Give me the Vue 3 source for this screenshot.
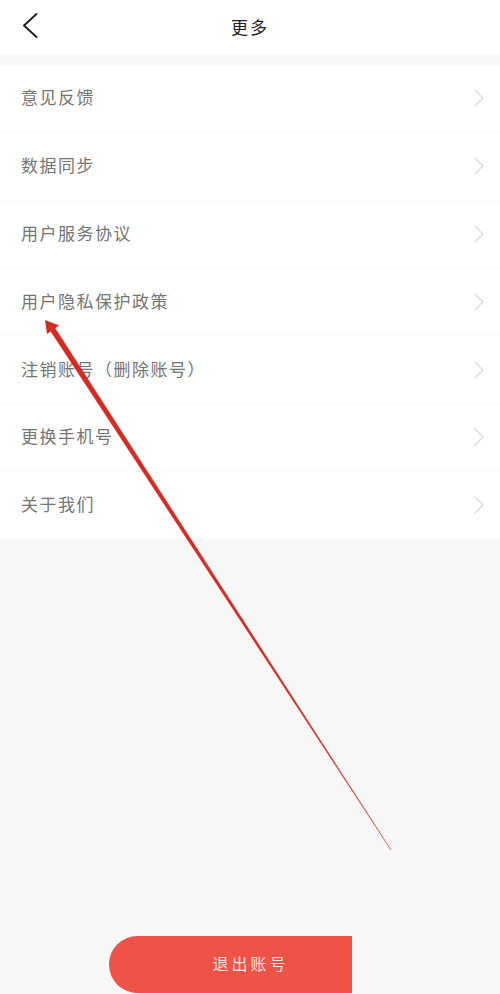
<template>
  <div class="page">
    <header class="topbar">
      <svg class="back" width="20" height="28" viewBox="0 0 20 28" fill="none">
        <path d="M15.5 2L3 13.5L15.5 25" stroke="#222" stroke-width="2" stroke-linecap="round" stroke-linejoin="round"/>
      </svg>
      <span class="title">更多</span>
    </header>

    <ul class="menu">
      <li v-for="item in items" :key="item" class="menu-row">
        <span class="menu-label">{{ item }}</span>
        <svg width="12" height="20" viewBox="0 0 12 20" fill="none">
          <path d="M2 2L10 10L2 18" stroke="#dcdcdc" stroke-width="1.5" stroke-linecap="round" stroke-linejoin="round"/>
        </svg>
      </li>
    </ul>

    <button class="logout">退出账号</button>

    <!-- красная стрелка поверх скриншота -->
    <svg class="annotation" width="500" height="994" viewBox="0 0 500 994">
      <polygon points="391,850 50.5,331 55,328" fill="#d42c22" stroke="#d42c22" stroke-width="0.4"/>
      <polygon points="45,320 47,334 59,325.5" fill="#d42c22"/>
    </svg>
  </div>
</template>

<script setup>
const items = [
  '意见反馈',
  '数据同步',
  '用户服务协议',
  '用户隐私保护政策',
  '注销账号（删除账号）',
  '更换手机号',
  '关于我们'
]
</script>

<style>
html,
body {
  margin: 0;
  background: #f7f7f7;
}
</style>

<style scoped>
.page {
  position: relative;
  display: flex;
  flex-direction: column;
  width: 500px;
  height: 994px;
  overflow: hidden;
  background: #f7f7f7;
  font-family: "Noto Sans CJK SC", "Noto Sans", sans-serif;
}

.topbar {
  position: relative;
  display: flex;
  align-items: center;
  justify-content: center;
  height: 55px;
  padding-bottom: 3px;
  box-sizing: border-box;
  background: #fff;
}

.back {
  position: absolute;
  left: 21px;
  top: 12px;
}

.title {
  color: #222;
  font-size: 17px;
  letter-spacing: 2px;
}

.menu {
  display: flex;
  flex-direction: column;
  gap: 1px;
  margin: 10px 0 0;
  padding: 0;
  list-style: none;
  background: #fafafa;
}

.menu-row {
  display: flex;
  align-items: center;
  justify-content: space-between;
  height: 66.8px;
  padding: 0 15px 0 21px;
  background: #fff;
}

.menu-label {
  margin-top: -3px;
  color: #757575;
  font-size: 17px;
  letter-spacing: 1.5px;
}

.logout {
  align-self: flex-start;
  width: 243px;
  height: 57px;
  margin: auto 0 1px 109px;
  padding: 0 0 3px 40px;
  border: 0;
  border-radius: 29px 0 0 29px;
  background: #ef5246;
  color: #fbe3e0;
  font-family: inherit;
  font-size: 16px;
  letter-spacing: 3px;
}

.annotation {
  position: absolute;
  left: 0;
  top: 0;
  pointer-events: none;
}
</style>
